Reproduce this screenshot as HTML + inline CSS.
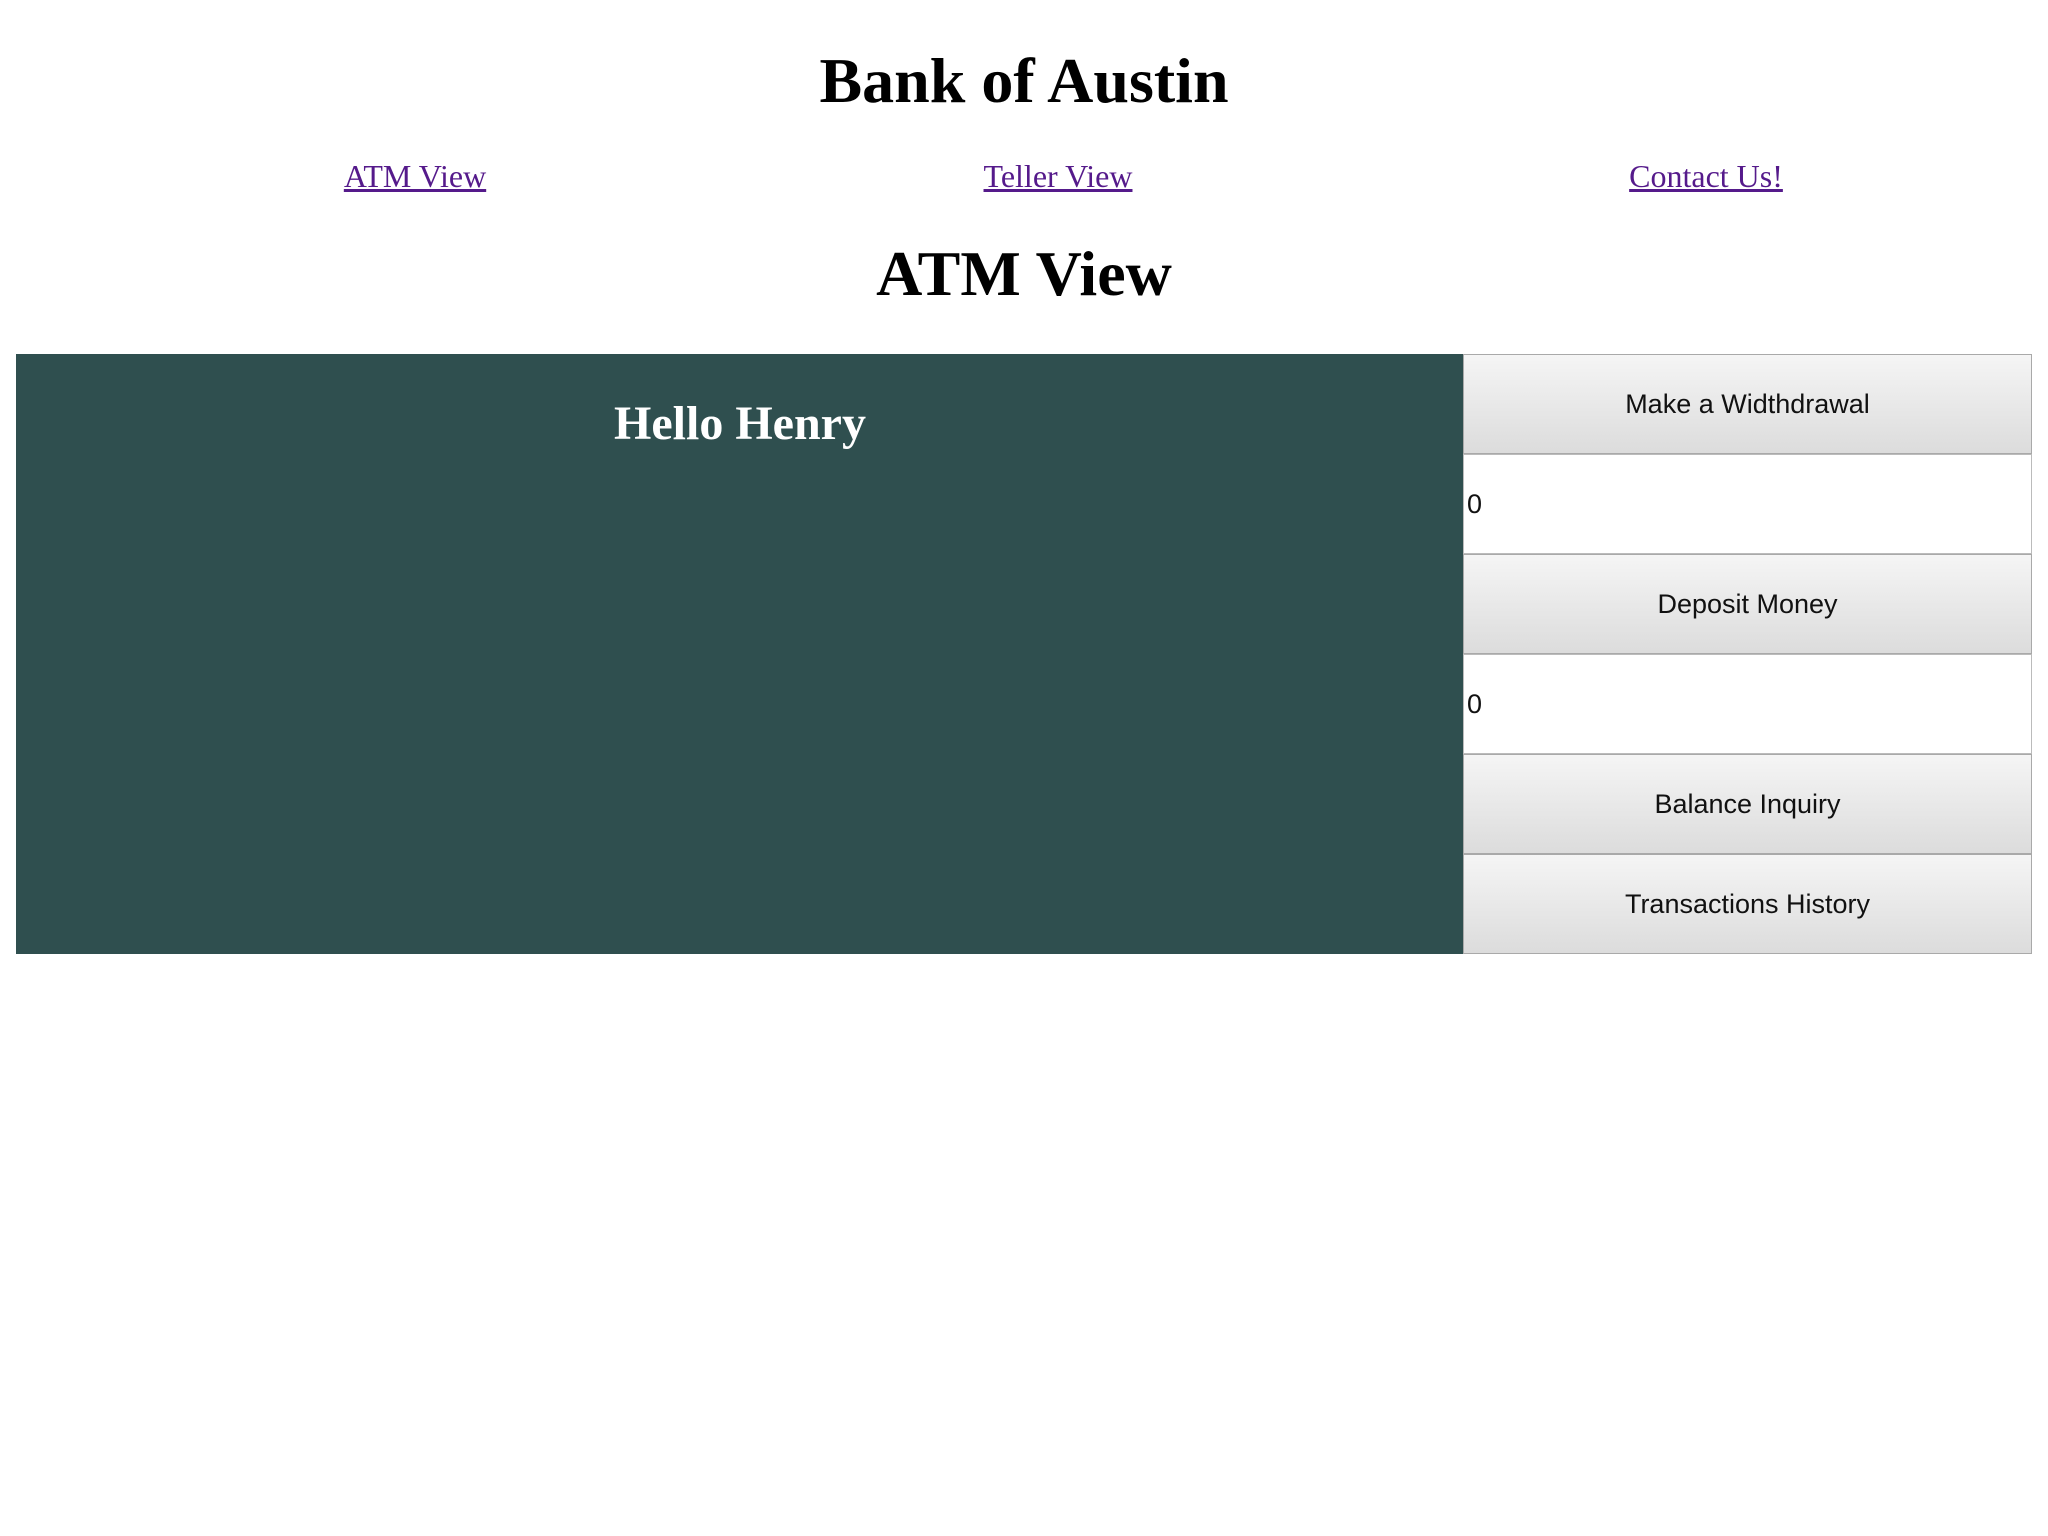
<!DOCTYPE html>
<html><head><style>
html,body{margin:0;padding:0;background:#fff;width:2048px;height:1536px;overflow:hidden;position:relative}
.c{position:absolute;white-space:nowrap;transform:translate(-50%,-50%);line-height:1}
h1,.h{font-family:"Liberation Serif",serif;font-weight:bold;margin:0}
a{font-family:"Liberation Serif",serif;color:#551a8b;text-decoration:underline;font-size:32px}
.panel{position:absolute;left:16px;top:354px;width:1447px;height:600px;background:#2f4f4f}
.col{position:absolute;left:1463px;top:354px;width:569px}
.btn{box-sizing:border-box;height:100px;border:1px solid #a9a9a9;background:linear-gradient(#f5f5f5,#dcdcdc);font-family:"Liberation Sans",sans-serif;font-size:27px;color:#111;display:flex;align-items:center;justify-content:center}
.inp{box-sizing:border-box;height:100px;border:1px solid #bbb;background:#fff;font-family:"Liberation Sans",sans-serif;font-size:27px;color:#111;display:flex;align-items:center;padding-left:3px}
</style></head><body>
<div class="c h" style="left:1024px;top:81px;font-size:64px">Bank of Austin</div>
<a class="c" style="left:415px;top:176px">ATM View</a>
<a class="c" style="left:1058px;top:176px">Teller View</a>
<a class="c" style="left:1706px;top:176px">Contact Us!</a>
<div class="c h" style="left:1024px;top:274px;font-size:64px">ATM View</div>
<div class="panel"></div>
<div class="c h" style="left:740px;top:424px;font-size:48px;color:#fff">Hello Henry</div>
<div class="col">
<div class="btn">Make a Widthdrawal</div>
<div class="inp">0</div>
<div class="btn">Deposit Money</div>
<div class="inp">0</div>
<div class="btn">Balance Inquiry</div>
<div class="btn">Transactions History</div>
</div>
</body></html>
